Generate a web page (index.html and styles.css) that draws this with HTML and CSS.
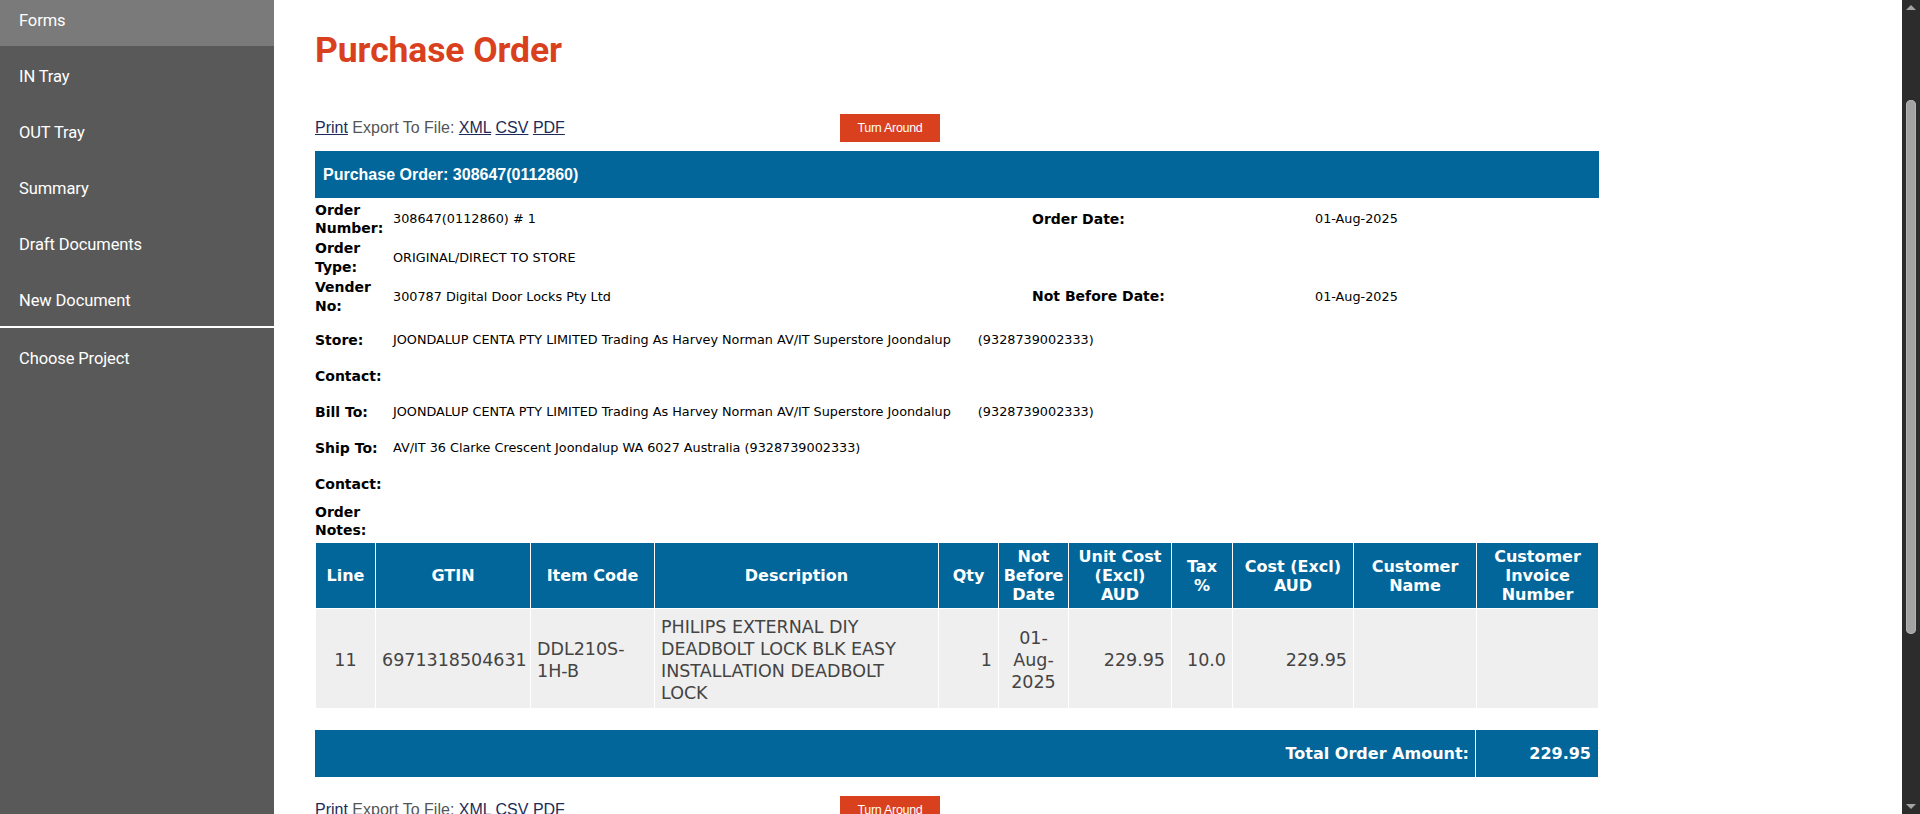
FILE: index.html
```html
<!DOCTYPE html>
<html lang="en">
<head>
<meta charset="utf-8">
<title>Purchase Order</title>
<link rel="stylesheet" href="styles.css">
</head>
<body>
<aside class="sidebar">
  <nav class="nav">
    <a class="nav-item active">Forms</a>
    <a class="nav-item">IN Tray</a>
    <a class="nav-item">OUT Tray</a>
    <a class="nav-item">Summary</a>
    <a class="nav-item">Draft Documents</a>
    <a class="nav-item divider">New Document</a>
    <a class="nav-item">Choose Project</a>
  </nav>
</aside>

<main class="main">
  <div class="content">
    <h1 class="title">Purchase Order</h1>

    <div class="toolbar">
      <div class="links"><a class="lnk">Print</a> Export To File: <a class="lnk">XML</a> <a class="lnk">CSV</a> <a class="lnk">PDF</a></div>
      <button class="btn">Turn Around</button>
    </div>

    <div class="po-bar">Purchase Order: 308647(0112860)</div>

    <div class="info">
      <div class="lbl">Order Number:</div>
      <div class="val">308647(0112860) # 1</div>
      <div class="lbl2">Order Date:</div>
      <div class="val">01-Aug-2025</div>

      <div class="lbl">Order Type:</div>
      <div class="val span3">ORIGINAL/DIRECT TO STORE</div>

      <div class="lbl">Vender No:</div>
      <div class="val">300787 Digital Door Locks Pty Ltd</div>
      <div class="lbl2">Not Before Date:</div>
      <div class="val">01-Aug-2025</div>

      <div class="lbl pt">Store:</div>
      <div class="val span3 pt">JOONDALUP CENTA PTY LIMITED Trading As Harvey Norman AV/IT Superstore Joondalup<span class="gln">(9328739002333)</span></div>

      <div class="lbl">Contact:</div>
      <div class="val span3"></div>

      <div class="lbl">Bill To:</div>
      <div class="val span3">JOONDALUP CENTA PTY LIMITED Trading As Harvey Norman AV/IT Superstore Joondalup<span class="gln">(9328739002333)</span></div>

      <div class="lbl">Ship To:</div>
      <div class="val span3">AV/IT 36 Clarke Crescent Joondalup WA 6027 Australia (9328739002333)</div>

      <div class="lbl">Contact:</div>
      <div class="val span3"></div>

      <div class="lbl">Order Notes:</div>
      <div class="val span3"></div>
    </div>

    <table class="lines">
      <colgroup>
        <col class="c-line"><col class="c-gtin"><col class="c-item"><col class="c-desc"><col class="c-qty"><col class="c-nbd"><col class="c-unit"><col class="c-tax"><col class="c-cost"><col class="c-cname"><col class="c-inv">
      </colgroup>
      <thead>
        <tr class="head-row">
          <th>Line</th><th>GTIN</th><th>Item Code</th><th>Description</th><th>Qty</th><th>Not Before Date</th><th>Unit Cost (Excl) AUD</th><th class="th-tax">Tax %</th><th>Cost (Excl) AUD</th><th>Customer Name</th><th>Customer Invoice Number</th>
        </tr>
      </thead>
      <tbody>
        <tr class="data-row">
          <td class="center">11</td>
          <td>6971318504631</td>
          <td>DDL210S-1H-B</td>
          <td>PHILIPS EXTERNAL DIY DEADBOLT LOCK BLK EASY INSTALLATION DEADBOLT LOCK</td>
          <td class="right">1</td>
          <td class="center">01-Aug-2025</td>
          <td class="right">229.95</td>
          <td class="right">10.0</td>
          <td class="right">229.95</td>
          <td></td>
          <td></td>
        </tr>
      </tbody>
    </table>

    <div class="total-bar">
      <div class="total-label">Total Order Amount:</div>
      <div class="total-value">229.95</div>
    </div>

    <div class="toolbar bottom">
      <div class="links"><a class="lnk">Print</a> Export To File: <a class="lnk">XML</a> <a class="lnk">CSV</a> <a class="lnk">PDF</a></div>
      <button class="btn">Turn Around</button>
    </div>
  </div>
</main>

<div class="scrollbar">
  <div class="arrow up"></div>
  <div class="thumb"></div>
  <div class="track-rest"></div>
  <div class="arrow down"></div>
</div>
</body>
</html>
```

FILE: styles.css
```css
html, body {
  margin: 0;
  padding: 0;
  height: 814px;
  overflow: hidden;
  background: #ffffff;
}

body {
  display: flex;
  font-family: "Liberation Sans", Arial, sans-serif;
}

/* Sidebar */
.sidebar {
  width: 274px;
  flex: none;
  background: #595959;
  height: 814px;
}

.nav {
  display: flex;
  flex-direction: column;
  margin-top: -10px;
}

.nav-item {
  display: flex;
  align-items: center;
  height: 56px;
  box-sizing: border-box;
  padding-top: 5px;
  padding-left: 19px;
  color: #ffffff;
  font-family: Roboto, "Open Sans", sans-serif;
  font-size: 16.5px;
  letter-spacing: -0.1px;
}

.nav-item.active {
  background: #7a7a7a;
}

.nav-item.divider {
  height: 58px;
  border-bottom: 2px solid #ffffff;
}

/* Main */
.main {
  flex: 1;
  padding-left: 41px;
  overflow: hidden;
  height: 814px;
}

.content {
  width: 1284px;
}

.title {
  margin: 29px 0 0 0;
  font-family: Roboto, sans-serif;
  font-weight: 700;
  font-size: 35.5px;
  line-height: 42px;
  color: #d9411e;
  letter-spacing: -0.1px;
}

.toolbar {
  display: flex;
  align-items: center;
  margin-top: 43px;
  height: 28px;
}

.toolbar.bottom {
  margin-top: 19px;
}

.links {
  width: 525px;
  font-family: "Liberation Sans", Arial, sans-serif;
  font-size: 16px;
  color: #555555;
  line-height: 28px;
}

.lnk {
  color: #1c2b59;
  text-decoration: underline;
}

.btn {
  width: 100px;
  height: 28px;
  border: none;
  background: #d9411e;
  color: #ffffff;
  font-family: "Liberation Sans", Arial, sans-serif;
  font-size: 12.5px;
  padding: 0;
  letter-spacing: -0.3px;
}

.po-bar {
  margin-top: 9px;
  height: 47px;
  background: #02669a;
  color: #ffffff;
  font-family: "Liberation Sans", Arial, sans-serif;
  font-weight: 700;
  font-size: 16px;
  display: flex;
  align-items: center;
  padding-left: 8px;
}

/* Info grid */
.info {
  margin-top: 2px;
  display: grid;
  grid-template-columns: 78px 639px 283px 1fr;
  grid-template-rows: 38px 39px 39px 42px 36px 36px 36px 36px 38px;
  align-items: center;
  color: #000000;
}

.lbl, .lbl2 {
  font-family: "DejaVu Sans", Verdana, sans-serif;
  font-weight: 700;
  font-size: 14px;
  line-height: 18.5px;
}

.val {
  font-family: "DejaVu Sans", Verdana, sans-serif;
  font-size: 12.8px;
  line-height: 18px;
  white-space: nowrap;
}

.span3 {
  grid-column: span 3;
}

.pt {
  padding-top: 6px;
}

.gln {
  margin-left: 27px;
}

/* Lines table */
.lines {
  margin-top: 2px;
  width: 1283px;
  table-layout: fixed;
  border-collapse: collapse;
  font-family: "DejaVu Sans", Verdana, sans-serif;
}

.c-line { width: 60px; }
.c-gtin { width: 155px; }
.c-item { width: 124px; }
.c-desc { width: 284px; }
.c-qty { width: 60px; }
.c-nbd { width: 70px; }
.c-unit { width: 103px; }
.c-tax { width: 61px; }
.c-cost { width: 121px; }
.c-cname { width: 123px; }
.c-inv { width: 122px; }

.head-row {
  height: 66px;
}

.lines th {
  background: #02669a;
  color: #ffffff;
  font-size: 16px;
  line-height: 19px;
  font-weight: 700;
  padding: 0 4px;
  border: 1px solid #ffffff;
  text-align: center;
  vertical-align: middle;
}

.lines th.th-tax {
  padding: 0 7px;
}

.data-row {
  height: 100px;
}

.lines td {
  background: #efefef;
  color: #444444;
  font-size: 17.5px;
  line-height: 22px;
  padding: 5px 6px 3px 6px;
  border: 1px solid #ffffff;
  vertical-align: middle;
  text-align: left;
}

.lines td.center { text-align: center; }
.lines td.right { text-align: right; }

/* Total */
.total-bar {
  margin-top: 21px;
  width: 1283px;
  height: 47px;
  display: flex;
  background: #02669a;
  color: #ffffff;
  font-family: "DejaVu Sans", Verdana, sans-serif;
  font-weight: 700;
  font-size: 16px;
}

.total-label {
  flex: 1;
  display: flex;
  align-items: center;
  justify-content: flex-end;
  padding-right: 6px;
  border-right: 1px solid #ffffff;
}

.total-value {
  width: 122px;
  display: flex;
  align-items: center;
  justify-content: flex-end;
  padding-right: 7px;
  box-sizing: border-box;
}

/* Scrollbar */
.scrollbar {
  width: 18px;
  flex: none;
  height: 814px;
  background: #2c2c2c;
  display: flex;
  flex-direction: column;
  align-items: center;
}

.arrow {
  width: 0;
  height: 0;
  border-left: 5px solid transparent;
  border-right: 5px solid transparent;
}

.arrow.up {
  margin-top: 5px;
  border-bottom: 5px solid #a3a3a3;
}

.arrow.down {
  margin-bottom: 5px;
  border-top: 5px solid #a3a3a3;
}

.thumb {
  margin-top: 90px;
  width: 10px;
  height: 534px;
  border-radius: 5px;
  background: #a3a3a3;
  box-shadow: inset 0 0 0 1px #b3b3b3;
}

.track-rest {
  flex: 1;
}
```
